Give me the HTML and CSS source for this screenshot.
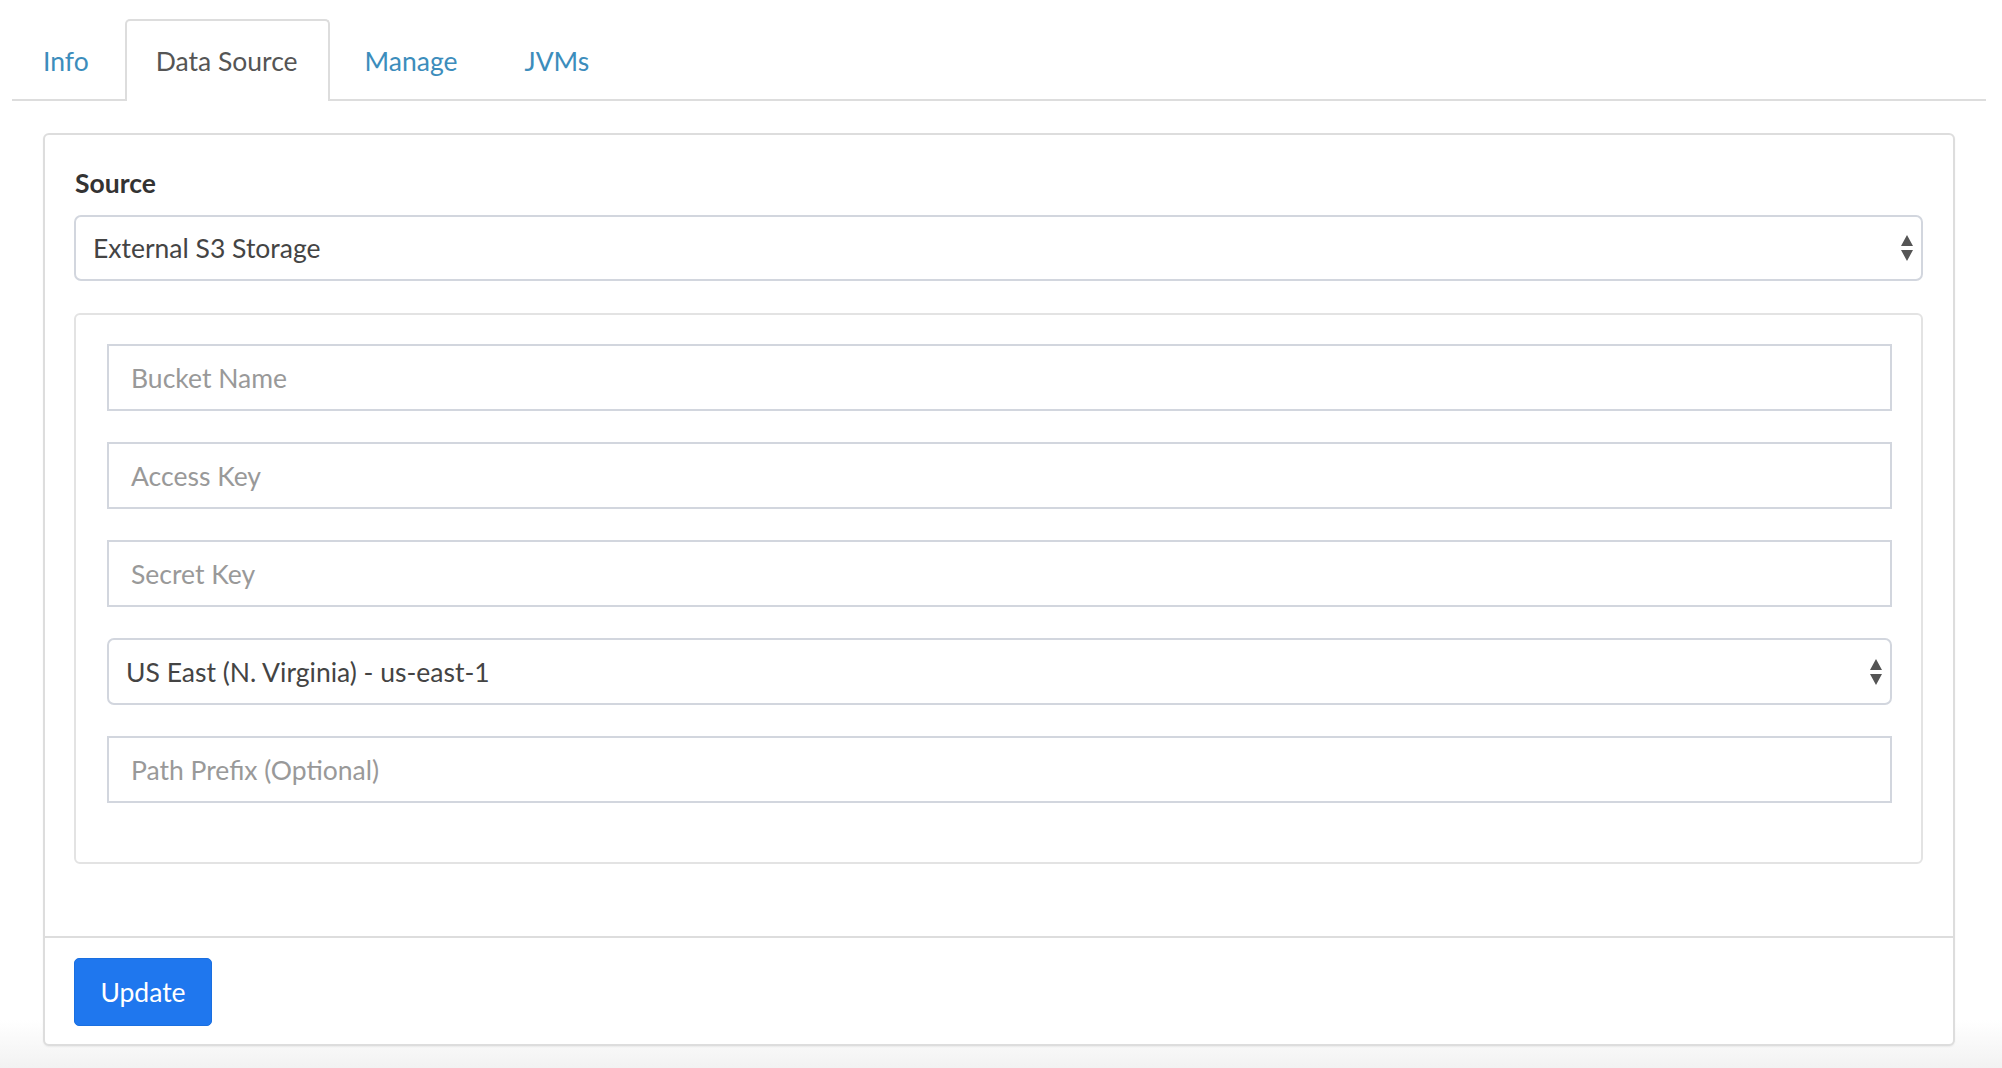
FILE: index.html
```html
<!DOCTYPE html>
<html lang="en">
<head>
<meta charset="utf-8">
<title>Data Source</title>
<link rel="stylesheet" href="styles.css">
</head>
<body>
<div class="page">
  <ul class="tabs">
    <li class="tab"><a href="#">Info</a></li>
    <li class="tab active"><a href="#">Data Source</a></li>
    <li class="tab"><a href="#">Manage</a></li>
    <li class="tab"><a href="#">JVMs</a></li>
  </ul>

  <div class="card">
    <div class="card-body">
      <label class="label">Source</label>
      <div class="select rounded">
        <span class="select-text">External S3 Storage</span>
        <svg class="arrows" width="12" height="26" viewBox="0 0 12 26"><path d="M6 0 L12 11 L0 11 Z M0 15 L12 15 L6 26 Z" fill="#555"/></svg>
      </div>

      <div class="well">
        <div class="input"><span class="ph">Bucket Name</span></div>
        <div class="input"><span class="ph">Access Key</span></div>
        <div class="input"><span class="ph">Secret Key</span></div>
        <div class="select rounded region">
          <span class="select-text">US East (N. Virginia) - us-east-1</span>
          <svg class="arrows" width="12" height="26" viewBox="0 0 12 26"><path d="M6 0 L12 11 L0 11 Z M0 15 L12 15 L6 26 Z" fill="#555"/></svg>
        </div>
        <div class="input last"><span class="ph">Path Prefix (Optional)</span></div>
      </div>
    </div>
    <div class="card-footer">
      <button class="btn">Update</button>
    </div>
  </div>
</div>
</body>
</html>
```

FILE: styles.css
```css
html, body {
  margin: 0;
  padding: 0;
}
body {
  min-height: 100vh;
  font-family: "Source Sans Pro", Lato, "Open Sans", sans-serif;
  color: #333;
  background: linear-gradient(to bottom, #ffffff calc(100% - 48px), #f2f2f2 100%);
}
.page {
  padding: 19px 16px 0 12px;
}
.tabs {
  list-style: none;
  margin: 0;
  padding: 0;
  display: flex;
  border-bottom: 2px solid #dddddd;
  height: 80px;
}
.tab {
  margin-right: 4px;
  margin-bottom: -2px;
}
.tab a {
  display: flex;
  align-items: center;
  box-sizing: border-box;
  height: 82px;
  padding: 0 30px 0 29px;
  font-size: 26.5px;
  color: #3c8dbc;
  text-decoration: none;
  border: 2px solid transparent;
  border-bottom: none;
  border-radius: 5px 5px 0 0;
}
.tab.active a {
  color: #555;
  background: #fff;
  border-color: #dddddd;
}
.card {
  margin: 32px 31px 0 31px;
  border: 2px solid #dddddd;
  border-radius: 6px;
  background: #fff;
  box-shadow: 0 1px 2px rgba(0,0,0,0.06);
}
.card-body {
  padding: 33px 30px 72px 29px;
}
.label {
  display: block;
  font-size: 26.5px;
  font-weight: 700;
  line-height: 31px;
  color: #333;
  margin: 0 0 16px 1px;
}
.select {
  height: 66px;
  box-sizing: border-box;
  border: 2px solid #d2d6de;
  display: flex;
  align-items: center;
  justify-content: space-between;
  padding: 0 8px 0 17px;
  background: #fff;
}
.rounded {
  border-radius: 7px;
}
.select-text {
  font-size: 26.5px;
  color: #444;
}
.arrows {
  display: block;
}
.well {
  margin-top: 32px;
  border: 2px solid #e3e3e3;
  border-radius: 6px;
  padding: 29px 29px 28px 31px;
}
.input {
  height: 67px;
  box-sizing: border-box;
  border: 2px solid #d2d6de;
  display: flex;
  align-items: center;
  padding: 0 22px;
  margin-bottom: 31px;
  background: #fff;
}
.region {
  height: 67px;
  margin-bottom: 31px;
}
.input.last {
  margin-bottom: 31px;
}
.ph {
  font-size: 26.5px;
  color: #999;
}
.card-footer {
  border-top: 2px solid #dddddd;
  padding: 20px 29px 18px;
}
.btn {
  display: block;
  width: 138px;
  height: 68px;
  background: #1f77ee;
  border: 1px solid #1a6fe0;
  border-radius: 5px;
  color: #fff;
  font-family: inherit;
  font-size: 26.5px;
  padding: 0;
  cursor: pointer;
}
```
